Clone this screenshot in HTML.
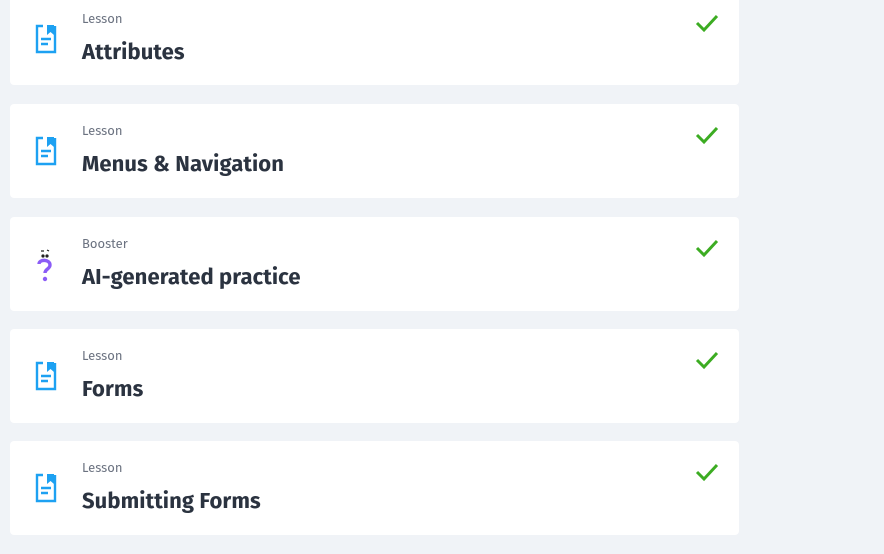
<!DOCTYPE html>
<html><head><style>
body{margin:0;width:884px;height:554px;background:#f0f3f7;position:relative;overflow:hidden;font-family:"Fira Sans","Liberation Sans",sans-serif}
.card{position:absolute;left:10px;width:729px;height:94px;background:#fff;border-radius:4px}
.lab{position:absolute;left:72px;top:20px;font-size:13px;color:#6b7280}
.tt{position:absolute;left:72px;top:46px;font-size:22px;font-weight:bold;color:#2b3340;letter-spacing:0.1px}
.ic{position:absolute;left:24px;top:32px}
.ck{position:absolute;left:685px;top:21px}
</style></head><body>
<div class="card" style="top:-9px"><svg class="ic" style="top:33px" width="24" height="30" viewBox="0 0 24 30"><path d="M9 2H3v26h18V2" fill="none" stroke="#1da1f2" stroke-width="2.4"/><path d="M13 1h7v10l-3.5-3-3.5 3z" fill="#1da1f2"/><path d="M7 15h10M7 20h7" stroke="#1da1f2" stroke-width="2.4"/></svg><div class="lab" style="top:21px">Lesson</div><div class="tt" style="top:47px">Attributes</div><svg class="ck" style="top:22px" width="24" height="20"><path d="M2 10l7 7L22 3" fill="none" stroke="#3cac22" stroke-width="3"/></svg></div>
<div class="card" style="top:104px"><svg class="ic" width="24" height="30" viewBox="0 0 24 30"><path d="M9 2H3v26h18V2" fill="none" stroke="#1da1f2" stroke-width="2.4"/><path d="M13 1h7v10l-3.5-3-3.5 3z" fill="#1da1f2"/><path d="M7 15h10M7 20h7" stroke="#1da1f2" stroke-width="2.4"/></svg><div class="lab">Lesson</div><div class="tt">Menus &amp; Navigation</div><svg class="ck" width="24" height="20"><path d="M2 10l7 7L22 3" fill="none" stroke="#3cac22" stroke-width="3"/></svg></div>
<div class="card" style="top:217px"><svg style="position:absolute;left:26px;top:30px" width="16" height="36" viewBox="0 0 16 36"><path d="M5 4h3M11 3l2 1" stroke="#222" stroke-width="1.2"/><circle cx="7" cy="9" r="1.6" fill="#222"/><circle cx="11" cy="9" r="1.6" fill="#222"/><path d="M3 17c0-5 11-5 11 1 0 4-5 4-5 8" fill="none" stroke="#8b5cf6" stroke-width="3.4"/><circle cx="9" cy="32" r="2.2" fill="#8b5cf6"/></svg><div class="lab">Booster</div><div class="tt">AI-generated practice</div><svg class="ck" width="24" height="20"><path d="M2 10l7 7L22 3" fill="none" stroke="#3cac22" stroke-width="3"/></svg></div>
<div class="card" style="top:329px"><svg class="ic" width="24" height="30" viewBox="0 0 24 30"><path d="M9 2H3v26h18V2" fill="none" stroke="#1da1f2" stroke-width="2.4"/><path d="M13 1h7v10l-3.5-3-3.5 3z" fill="#1da1f2"/><path d="M7 15h10M7 20h7" stroke="#1da1f2" stroke-width="2.4"/></svg><div class="lab">Lesson</div><div class="tt">Forms</div><svg class="ck" width="24" height="20"><path d="M2 10l7 7L22 3" fill="none" stroke="#3cac22" stroke-width="3"/></svg></div>
<div class="card" style="top:441px"><svg class="ic" width="24" height="30" viewBox="0 0 24 30"><path d="M9 2H3v26h18V2" fill="none" stroke="#1da1f2" stroke-width="2.4"/><path d="M13 1h7v10l-3.5-3-3.5 3z" fill="#1da1f2"/><path d="M7 15h10M7 20h7" stroke="#1da1f2" stroke-width="2.4"/></svg><div class="lab">Lesson</div><div class="tt">Submitting Forms</div><svg class="ck" width="24" height="20"><path d="M2 10l7 7L22 3" fill="none" stroke="#3cac22" stroke-width="3"/></svg></div>
</body></html>
